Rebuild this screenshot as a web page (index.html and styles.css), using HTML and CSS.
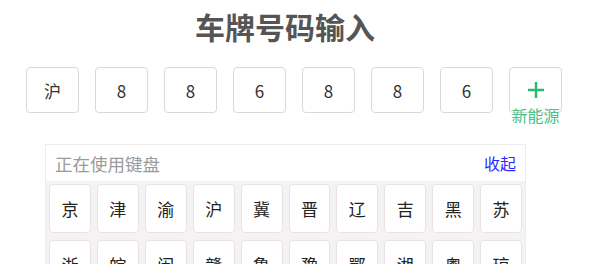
FILE: index.html
```html
<!DOCTYPE html>
<html lang="zh">
<head>
<meta charset="utf-8">
<title>车牌号码输入</title>
<link rel="stylesheet" href="styles.css">
</head>
<body>
<div class="page">
  <h1 class="title">车牌号码输入</h1>
  <div class="plate-row">
    <div class="plate-box">沪</div>
    <div class="plate-box">8</div>
    <div class="plate-box">8</div>
    <div class="plate-box">6</div>
    <div class="plate-box">8</div>
    <div class="plate-box">8</div>
    <div class="plate-box">6</div>
    <div class="plate-box plate-new">
      <svg class="plus" width="18" height="18" viewBox="0 0 18 18"><path d="M9 1v16M1 9h16" stroke="#2bb673" stroke-width="2.4" fill="none"/></svg>
      <span class="new-label">新能源</span>
    </div>
  </div>
  <div class="keyboard">
    <div class="kb-head">
      <span class="kb-status">正在使用键盘</span>
      <span class="kb-close">收起</span>
    </div>
    <div class="kb-keys">
      <div class="key">京</div><div class="key">津</div><div class="key">渝</div><div class="key">沪</div><div class="key">冀</div>
      <div class="key">晋</div><div class="key">辽</div><div class="key">吉</div><div class="key">黑</div><div class="key">苏</div>
      <div class="key">浙</div><div class="key">皖</div><div class="key">闽</div><div class="key">赣</div><div class="key">鲁</div>
      <div class="key">豫</div><div class="key">鄂</div><div class="key">湘</div><div class="key">粤</div><div class="key">琼</div>
      <div class="key">川</div><div class="key">贵</div><div class="key">云</div><div class="key">陕</div><div class="key">甘</div>
      <div class="key">青</div><div class="key">蒙</div><div class="key">桂</div><div class="key">宁</div><div class="key">新</div>
    </div>
  </div>
</div>
</body>
</html>
```
FILE: styles.css
```css
html, body {
  margin: 0;
  padding: 0;
  background: #fff;
}
body {
  font-family: "Noto Sans CJK SC", "Noto Sans", sans-serif;
  color: #333;
}
.page {
  width: 592px;
}
.title {
  width: 570px;
  margin: 8px 0 0;
  text-align: center;
  font-size: 30px;
  line-height: 36px;
  font-weight: 700;
  color: #555;
}
.plate-row {
  display: flex;
  gap: 16px;
  margin: 23px 0 0 26px;
}
.plate-box {
  position: relative;
  box-sizing: border-box;
  width: 53px;
  height: 46px;
  border: 1px solid #d9d9d9;
  border-radius: 4px;
  display: flex;
  align-items: center;
  justify-content: center;
  font-size: 17px;
  color: #333;
}
.plate-new {
  align-items: flex-start;
  padding-top: 13px;
}
.new-label {
  position: absolute;
  left: -2px;
  right: -2px;
  top: 38px;
  text-align: center;
  font-size: 16px;
  line-height: 18px;
  color: #45c285;
}
.keyboard {
  box-sizing: border-box;
  width: 481px;
  margin: 31px 0 0 45px;
  border: 1px solid #ececec;
  background: #f4f2f2;
}
.kb-head {
  height: 36px;
  background: #fff;
  display: flex;
  align-items: center;
  justify-content: space-between;
  padding: 0 9px;
}
.kb-status {
  font-size: 17.5px;
  color: #9a9a9a;
}
.kb-close {
  font-size: 16px;
  color: #2a2aff;
}
.kb-keys {
  display: grid;
  grid-template-columns: repeat(10, 1fr);
  column-gap: 6px;
  row-gap: 7px;
  padding: 3px 3px 6px;
}
.key {
  box-sizing: border-box;
  height: 49px;
  background: #fff;
  border: 1px solid #ebe3e3;
  border-radius: 4px;
  display: flex;
  align-items: center;
  justify-content: center;
  font-size: 17px;
  color: #222;
}
```
